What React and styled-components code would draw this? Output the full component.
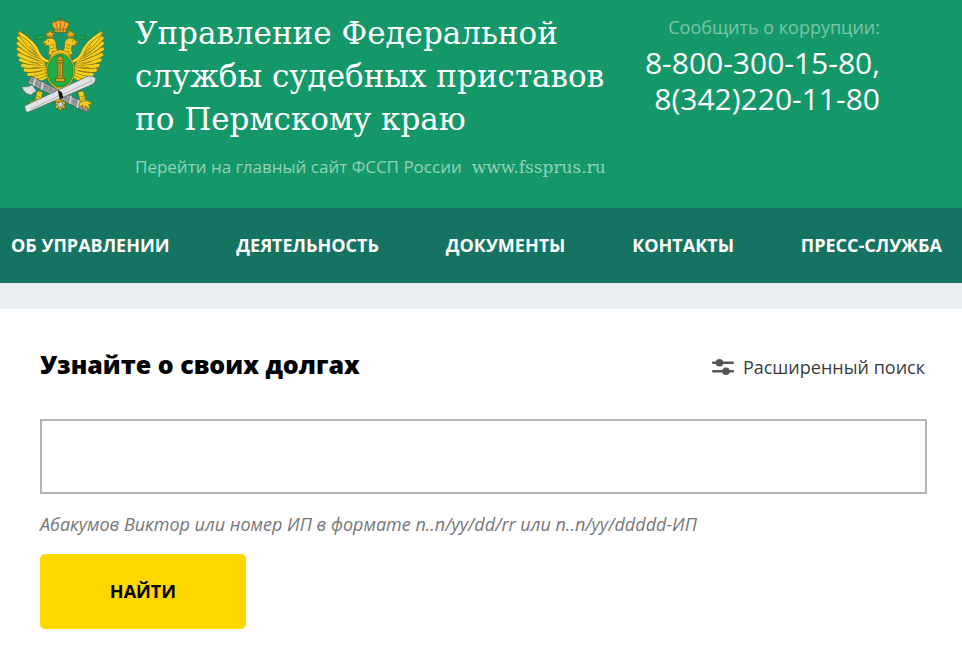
import React from "react";
import styled, { createGlobalStyle } from 'styled-components'

const GlobalStyle = createGlobalStyle`
    * {
        box-sizing: border-box;
    }
    body {
        margin: 0;
        background-color: #ffffff;
        font-family: "Open Sans", "Noto Sans", sans-serif;
        font-size: 18px;
        line-height: 24px;
        color: #000000;
    }
    h1, h2, p {
        margin: 0;
    }
    a {
        color: inherit;
        text-decoration: none;
    }
`

const Header = styled.header`
    display: flex;
    align-items: flex-start;
    min-height: 208px;
    padding: 10px 82px 24px 10px;
    background-color: #149869;
`

const EmblemLink = styled.a`
    flex: none;
    width: 100px;
    margin-right: 25px;
    svg {
        display: block;
    }
`

const Heading = styled.div`
    flex: 1;
    padding-top: 2px;
    white-space: nowrap;
`

const Title = styled.h1`
    font-family: "Roboto Slab", "DejaVu Serif", serif;
    font-size: 31px;
    font-weight: 400;
    line-height: 43px;
    color: #ffffff;
`

const MainSite = styled.p`
    display: flex;
    gap: 10px;
    margin-top: 14px;
    font-size: 17px;
    color: #94d0b8;
`

const SiteLink = styled.a`
    font-family: "Roboto Slab", "DejaVu Serif", serif;
`

const Contacts = styled.div`
    flex: none;
    padding-top: 5px;
    text-align: right;
    color: #7cc5a8;
`

const Phone = styled.a`
    display: block;
    font-size: 30px;
    line-height: 36px;
    color: #ffffff;
`

const PhoneList = styled.div`
    padding-top: 6px;
`

const Nav = styled.nav`
    display: flex;
    align-items: center;
    justify-content: space-between;
    height: 75px;
    padding: 0 20px 2px 11px;
    background-color: #157461;
`

const NavLink = styled.a`
    font-weight: 700;
    text-transform: uppercase;
    color: #ffffff;
`

const Strip = styled.div`
    height: 26px;
    background-color: #e9eef2;
`

const Search = styled.form`
    padding: 40px 35px 24px 40px;
`

const SearchTop = styled.div`
    display: flex;
    align-items: flex-end;
    justify-content: space-between;
`

const SearchTitle = styled.h2`
    font-size: 25px;
    font-weight: 800;
    line-height: 30px;
`

const Advanced = styled.a`
    display: flex;
    align-items: center;
    gap: 9px;
    padding-right: 2px;
    color: #3c3c3c;
`

const Query = styled.input`
    display: block;
    width: 100%;
    height: 75px;
    margin-top: 40px;
    padding: 0 20px;
    border: 2px solid #b3b3b3;
    border-radius: 0;
    background-color: #ffffff;
    font: inherit;
    outline: none;
`

const Hint = styled.label`
    display: block;
    margin-top: 18px;
    font-style: italic;
    font-weight: 500;
    color: #777777;
`

const Submit = styled.button`
    width: 206px;
    height: 75px;
    margin-top: 18px;
    padding: 0 0 2px;
    border: 0;
    border-radius: 5px;
    background-color: #ffd800;
    font: inherit;
    font-weight: 700;
    text-transform: uppercase;
    color: #000000;
    cursor: pointer;
`

const menu = ['Об управлении', 'Деятельность', 'Документы', 'Контакты', 'Пресс-служба']

// x1, y1 is the root of a feather, x2, y2 its tip
const feathers = [
    [112, 196, 84, 208],
    [108, 190, 68, 203],
    [106, 182, 56, 193],
    [104, 174, 46, 180],
    [102, 166, 38, 166],
    [100, 160, 32, 150],
    [98, 154, 27, 134],
    [95, 148, 25, 117],
    [91, 141, 25, 100],
    [86, 133, 26, 84],
    [80, 124, 30, 70],
]

function Wing() {
    return (
        <g strokeLinecap="round" fill="none">
            {feathers.map(([x1, y1, x2, y2]) => (
                <g key={y2}>
                    <path d={`M${x1} ${y1}Q${(x1 + x2) / 2 - 4} ${(y1 + y2) / 2 + 7} ${x2} ${y2}`} stroke="#7c6a10" strokeWidth="13" />
                    <path d={`M${x1} ${y1}Q${(x1 + x2) / 2 - 4} ${(y1 + y2) / 2 + 7} ${x2} ${y2}`} stroke="#f6cf1c" strokeWidth="10" />
                </g>
            ))}
            <path d="M33 72Q72 96 84 126Q92 146 113 154" stroke="#7c6a10" strokeWidth="10" />
            <path d="M33 72Q72 96 84 126Q92 146 113 154" stroke="#ffdc2a" strokeWidth="7" />
            <path d="M60 108l18 22M56 122l25 18M54 138l30 14M58 155l30 8M66 172l26 0M76 187l20-4" stroke="#7c6a10" strokeWidth="2" />
        </g>
    )
}

function Head() {
    return (
        <g stroke="#7c6a10" strokeWidth="2">
            <path d="M110 78Q94 76 75 78Q84 83 75 88Q94 87 108 82Z" fill="#1fae45" stroke="#14783a" />
            <path d="M128 138L146 124Q136 118 138 102Q137 86 122 84Q110 84 105 93L96 98L108 101L100 107L116 106Q121 116 114 132Z" fill="#f2c91e" />
            <path d="M124 126L133 123M123 116L134 113M121 106L133 104" />
            <circle cx="115" cy="93" r="1" fill="#5a4a08" />
            <path d="M109 68L114 70L120 61L126 70L132 67L129 82H111Z" fill="#f5a928" />
            <path d="M120 56V62M111 78H130" />
        </g>
    )
}

function Claw() {
    return (
        <g fill="#f6cf1c" stroke="#7c6a10" strokeWidth="2">
            <path d="M82 243L98 246L91 274L82 280L75 270Z" />
            <path d="M72 272Q58 273 56 284Q63 281 66 283Q60 292 66 299Q70 290 75 287Q75 296 82 299Q82 290 84 285Q90 287 94 294Q97 283 90 275Z" />
            <path d="M80 258l10 3M78 266l10 3" />
        </g>
    )
}

function Emblem() {
    return (
        <svg width="100" height="110" viewBox="0 0 300 330" role="img" aria-label="Герб ФССП России">
            <Wing />
            <g transform="translate(302 0) scale(-1 1)"><Wing /></g>

            {/* ribbons, heads and crowns */}
            <path d="M135 64Q115 62 108 72M168 64Q188 62 195 72" fill="none" stroke="#1fae45" strokeWidth="5" />
            <Head />
            <g transform="translate(302 0) scale(-1 1)"><Head /></g>
            <path d="M126 42Q126 34 136 36Q143 30 151 30Q160 30 166 36Q177 34 177 43Q175 52 169 56V67H134V56Q127 52 126 42Z" fill="#f5a928" stroke="#74520c" strokeWidth="2" />
            <path d="M151 32V57M138 39Q138 49 144 57M164 39Q164 49 158 57M134 58H168M151 21V30M146 25H156" fill="none" stroke="#74520c" strokeWidth="2" />
            <circle cx="142" cy="62" r="2" fill="#a93a20" />
            <circle cx="151" cy="62" r="2" fill="#1d8848" />
            <circle cx="160" cy="62" r="2" fill="#a93a20" />

            {/* tail */}
            <path d="M128 228L174 228L170 272Q151 284 132 272Z" fill="#f6cf1c" stroke="#7c6a10" strokeWidth="2" />
            <path d="M128 126L151 119L174 126L183 143L151 160L119 143Z" fill="#f2c91e" stroke="#7c6a10" strokeWidth="2" />

            {/* shield with the column of law */}
            <ellipse cx="151" cy="182" rx="43" ry="53" fill="#f2c91e" stroke="#7c6a10" strokeWidth="2" />
            <ellipse cx="151" cy="182" rx="39" ry="49" fill="#1fae45" stroke="#14783a" strokeWidth="2" />
            <g fill="#d9a821" stroke="#735611" strokeWidth="2">
                <path d="M141 140L145 143L150 137L155 143L160 140L158 151H143Z" />
                <rect x="141" y="152" width="19" height="6" />
                <rect x="144" y="159" width="13" height="41" />
                <path d="M150 160V199" />
                <rect x="141" y="198" width="19" height="6" />
                <rect x="137" y="205" width="27" height="10" />
            </g>
            <path d="M150 132V139" stroke="#735611" strokeWidth="2" />

            {/* fasces with the axe */}
            <path d="M35 230Q52 233 67 225L80 245Q70 245 64 255Q43 253 35 230Z" fill="#dedfe1" stroke="#606468" strokeWidth="2" />
            <path d="M58 208L230 295" stroke="#54585c" strokeWidth="24" />
            <path d="M59 209L229 294" stroke="#a6a9ad" strokeWidth="20" />
            <path d="M57 212L228 299M61 204L231 290M59 208L229 294" stroke="#63676b" strokeWidth="2" strokeDasharray="13 3" />
            <path d="M76 205l-5 22M99 217l-5 22M184 257l-5 25M207 269l-5 25" stroke="#dddfe1" strokeWidth="4" />
            <path d="M221 280L236 286L233 306L217 302Z" fill="#919598" stroke="#54585c" strokeWidth="2" />

            <Claw />
            <g transform="translate(302 0) scale(-1 1)"><Claw /></g>

            {/* scroll */}
            <path d="M45 287L235 198Q248 197 257 204Q257 215 250 222L53 307Q44 305 45 287Z" fill="#e2e3e5" stroke="#5f6367" strokeWidth="2" />
            <path d="M62 297L243 214M235 199Q246 205 247 221" fill="none" stroke="#999da1" strokeWidth="2" />
            <path d="M144 241L155 246L160 263L150 268L146 255Z" fill="#111111" />

            {/* order under the scroll */}
            <path d="M151 268L157 275L168 276L163 285L167 295L157 294L151 303L145 294L135 295L139 285L134 276L145 275Z" fill="#e9c11e" stroke="#5f520e" strokeWidth="2" />
            <circle cx="151" cy="284" r="8" fill="#eeeeee" stroke="#333333" strokeWidth="2" />
            <path d="M147 283h2M153 283h2M151 287v3" stroke="#333333" strokeWidth="2" />
        </svg>
    )
}

function SlidersIcon() {
    return (
        <svg width="22" height="18" viewBox="0 0 22 18" aria-hidden="true">
            <path d="M1.2 4.7H20.8M1.2 13.3H20.8" stroke="#555555" strokeWidth="2.4" strokeLinecap="round" />
            <circle cx="7.5" cy="4.7" r="3.8" fill="#555555" />
            <circle cx="14" cy="13.3" r="3.8" fill="#555555" />
        </svg>
    )
}

function App() {
    return (
        <>
            <GlobalStyle />
            <Header>
                <EmblemLink href="#"><Emblem /></EmblemLink>
                <Heading>
                    <Title>
                        Управление Федеральной<br />
                        службы судебных приставов<br />
                        по Пермскому краю
                    </Title>
                    <MainSite>
                        <span>Перейти на главный сайт ФССП России</span>
                        <SiteLink href="#">www.fssprus.ru</SiteLink>
                    </MainSite>
                </Heading>
                <Contacts>
                    <p>Сообщить о коррупции:</p>
                    <PhoneList>
                        <Phone href="tel:88003001580">8-800-300-15-80,</Phone>
                        <Phone href="tel:83422201180">8(342)220-11-80</Phone>
                    </PhoneList>
                </Contacts>
            </Header>
            <Nav>
                {menu.map(item => <NavLink href="#" key={item}>{item}</NavLink>)}
            </Nav>
            <Strip />
            <Search onSubmit={e => e.preventDefault()}>
                <SearchTop>
                    <SearchTitle>Узнайте о своих долгах</SearchTitle>
                    <Advanced href="#">
                        <SlidersIcon />
                        Расширенный поиск
                    </Advanced>
                </SearchTop>
                <Query id="query" type="text" />
                <Hint htmlFor="query">Абакумов Виктор или номер ИП в формате n..n/yy/dd/rr или n..n/yy/ddddd-ИП</Hint>
                <Submit type="submit">Найти</Submit>
            </Search>
        </>
    )
}
export default App;
